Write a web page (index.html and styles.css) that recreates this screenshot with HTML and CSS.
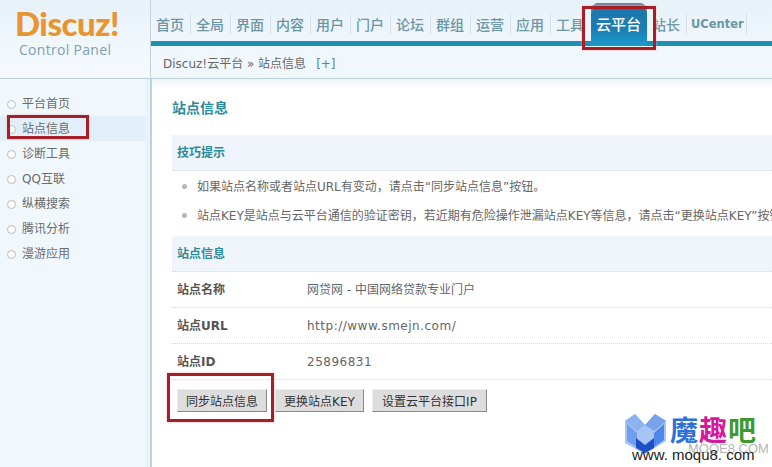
FILE: index.html
```html
<!DOCTYPE html>
<html lang="zh-CN">
<head>
    <meta charset="UTF-8">
    <meta name="viewport" content="width=device-width, initial-scale=1.0">
    <title>站点信息</title>
    <link rel="stylesheet" href="styles.css">
</head>
<body>
    <div class="header">
        <div class="logo">
            <div class="logo-name">Discuz!</div>
            <div class="logo-sub">Control Panel</div>
        </div>
        <div class="header-right">
            <div class="nav">
                <a class="nav-item">首页</a>
                <a class="nav-item">全局</a>
                <a class="nav-item">界面</a>
                <a class="nav-item">内容</a>
                <a class="nav-item">用户</a>
                <a class="nav-item">门户</a>
                <a class="nav-item">论坛</a>
                <a class="nav-item">群组</a>
                <a class="nav-item">运营</a>
                <a class="nav-item">应用</a>
                <a class="nav-item no-line">工具</a>
                <a class="nav-item active">云平台</a>
                <a class="nav-item">站长</a>
                <a class="nav-item latin">UCenter</a>
            </div>
            <div class="crumb">Discuz!云平台 » 站点信息<span class="crumb-add">[+]</span></div>
        </div>
    </div>

    <div class="main">
        <div class="sidebar">
            <ul class="side-list">
                <li>平台首页</li>
                <li class="current">站点信息</li>
                <li>诊断工具</li>
                <li>QQ互联</li>
                <li>纵横搜索</li>
                <li>腾讯分析</li>
                <li>漫游应用</li>
            </ul>
        </div>
        <div class="content">
            <h3 class="page-title">站点信息</h3>

            <div class="section-head">技巧提示</div>
            <ul class="tips">
                <li>如果站点名称或者站点URL有变动，请点击“同步站点信息”按钮。</li>
                <li>站点KEY是站点与云平台通信的验证密钥，若近期有危险操作泄漏站点KEY等信息，请点击“更换站点KEY”按钮。</li>
            </ul>

            <div class="section-head">站点信息</div>
            <div class="info-row"><span class="info-label">站点名称</span><span>网贷网 - 中国网络贷款专业门户</span></div>
            <div class="info-row"><span class="info-label">站点URL</span><span class="info-latin">http://www.smejn.com/</span></div>
            <div class="info-row"><span class="info-label">站点ID</span><span class="info-latin">25896831</span></div>

            <div class="buttons">
                <button class="btn btn-sync">同步站点信息</button>
                <button class="btn btn-key">更换站点KEY</button>
                <button class="btn btn-ip">设置云平台接口IP</button>
            </div>
        </div>
    </div>

    <!-- red marks drawn over the screenshot -->
    <div class="mark mark-nav"></div>
    <div class="mark mark-side"></div>
    <div class="mark mark-btn"></div>

    <div class="watermark">
        <svg class="wm-cube" width="41" height="41" viewBox="0 0 41 41">
            <polygon points="0,8 10,1 20,12 30,1 41,8 41,28 20,41 0,30" fill="#a6c4f4"/>
            <polygon points="0,8 10,1 20,12 12,18" fill="#8db2f0"/>
            <polygon points="20,12 30,1 41,8 29,18" fill="#77a2ec"/>
            <polygon points="2,11 12,20 12,34 2,28" fill="#6f9df0"/>
            <polygon points="29,20 39,11 39,27 29,34" fill="#4f86ea"/>
            <polygon points="11,25 20,32 29,25 29,35 20,40 11,35" fill="#1f4fc4"/>
        </svg>
        <div class="wm-text"><span class="wm-a">魔</span><span class="wm-b">趣</span><span class="wm-c">吧</span></div>
        <div class="wm-ghost">MOQE8.COM</div>
        <div class="wm-url">www. moqu8. com</div>
    </div>
</body>
</html>
```

FILE: styles.css
```css
* {
    margin: 0;
    padding: 0;
    box-sizing: border-box;
}

html, body {
    width: 772px;
    height: 467px;
    overflow: hidden;
}

body {
    position: relative;
    font-family: "DejaVu Sans", "Noto Sans CJK SC", sans-serif;
    font-size: 12px;
    color: #666;
    background: #fff;
}

ul {
    list-style: none;
}

/* header */
.header {
    display: flex;
    height: 79px;
    border-bottom: 1px solid #bcd0d8;
    background: linear-gradient(#e6f1f8, #f1f8fd 60%, #f4f9fd);
}

.logo {
    width: 151px;
    padding: 3px 0 0 15px;
    border-right: 1px solid #c3d5de;
}

.logo-name {
    font-family: Lato, sans-serif;
    font-weight: 900;
    font-size: 33px;
    line-height: 40px;
    color: #e8952f;
    letter-spacing: -0.5px;
}

.logo-sub {
    margin: -3px 0 0 4px;
    font-family: "Open Sans", sans-serif;
    font-size: 14px;
    line-height: 20px;
    letter-spacing: 0.3px;
    color: #7d9fae;
}

.header-right {
    flex: 1;
    min-width: 0;
}

.nav {
    display: flex;
    height: 46px;
    padding-top: 3px;
    border-bottom: 5px solid #1d90b3;
}

.nav-item {
    display: block;
    width: 40px;
    height: 20px;
    margin-top: 11px;
    padding-left: 5px;
    font-family: "Noto Sans CJK SC", sans-serif;
    font-size: 14px;
    line-height: 20px;
    color: #6b96a6;
    border-right: 1px solid #d3e2ea;
    font-weight: 500;
}

.nav-item.no-line {
    border-right: none;
}

/* taller than the nav so it covers the blue line */
.nav-item.active {
    width: 56px;
    height: 43px;
    margin-top: 0;
    padding: 11px 0 0 5px;
    font-size: 15px;
    color: #fff;
    border-right: none;
    border-radius: 8px 8px 0 0;
    background: linear-gradient(#1c76ac, #1c7db2 60%, #1b9ccb);
    box-shadow: inset 0 4px 0 #6f85a8;
}

.nav-item.latin {
    width: 60px;
    padding-left: 4px;
    font-family: "DejaVu Sans", sans-serif;
    font-size: 11.5px;
    font-weight: 700;
}

.crumb {
    height: 32px;
    padding-left: 12px;
    line-height: 36px;
    color: #666;
    background: #f1f8fd;
    white-space: nowrap;
}

.crumb-add {
    margin-left: 10px;
    color: #5d8294;
}

/* body */
.main {
    display: flex;
    height: 388px;
}

.sidebar {
    width: 152px;
    padding-top: 12px;
    background: linear-gradient(90deg, #f1f8fd 145px, #e9f3fa 145px);
    border-right: 2px solid #bdd3e4;
}

.side-list li {
    position: relative;
    width: 145px;
    height: 25px;
    padding-left: 22px;
    line-height: 27px;
    color: #6b6b6b;
}

.side-list li::before {
    content: "";
    position: absolute;
    left: 7px;
    top: 9px;
    width: 7px;
    height: 7px;
    border: 1px solid #bbb;
    border-radius: 50%;
    background: #fff;
}

.side-list li.current {
    background: #e0eff9;
}

.content {
    flex: 1;
    min-width: 0;
    padding-left: 20px;
    background: linear-gradient(#edf5fa, #fff 10px);
    white-space: nowrap;
}

.page-title {
    height: 56px;
    padding-top: 20px;
    font-size: 14px;
    line-height: 18px;
    font-weight: 700;
    color: #2b8b9c;
}

.section-head {
    height: 36px;
    padding-left: 5px;
    line-height: 37px;
    font-weight: 700;
    color: #2b8b9c;
    background: #f0f5fb;
    border-bottom: 1px dotted #d5dade;
}

.tips {
    height: 65px;
    padding-top: 2px;
}

.tips li {
    position: relative;
    height: 29px;
    padding-left: 25px;
    line-height: 29px;
    color: #666;
}

.tips li::before {
    content: "";
    position: absolute;
    left: 10px;
    top: 11px;
    width: 5px;
    height: 5px;
    border-radius: 50%;
    background: #b4b4b4;
}

.info-row {
    display: flex;
    height: 36px;
    line-height: 37px;
    border-bottom: 1px dotted #d5dade;
}

.info-label {
    width: 135px;
    padding-left: 5px;
    font-weight: 700;
    color: #555;
}

.info-latin {
    letter-spacing: 0.5px;
}

.buttons {
    display: flex;
    padding: 9px 0 0 5px;
}

.btn {
    height: 23px;
    margin-right: 8px;
    font-family: inherit;
    font-size: 12px;
    color: #333;
    background: #ddd;
    border: 1px solid;
    border-color: #eee #888 #888 #eee;
}

.btn-sync {
    width: 90px;
}

.btn-key {
    width: 89px;
}

.btn-ip {
    width: 115px;
}

/* red marks */
.mark {
    position: absolute;
    border: 3px solid #a81e26;
    box-shadow: 0 0 2px #f3b5b5;
}

.mark-nav {
    left: 582px;
    top: 6px;
    width: 74px;
    height: 44px;
}

.mark-side {
    left: 7px;
    top: 115px;
    width: 82px;
    height: 24px;
}

.mark-btn {
    left: 167px;
    top: 373px;
    width: 107px;
    height: 49px;
}

/* watermark in the corner */
.watermark {
    position: absolute;
    left: 625px;
    top: 412px;
    width: 147px;
    height: 50px;
}

.wm-cube {
    position: absolute;
    left: 0;
    top: 1px;
}

.wm-text {
    position: absolute;
    left: 45px;
    top: 0;
    font-family: "Noto Sans CJK SC", sans-serif;
    font-size: 28px;
    line-height: 34px;
    font-weight: 700;
    letter-spacing: 1px;
    white-space: nowrap;
}

.wm-a {
    color: #2f6fd8;
}

.wm-b {
    color: #d6189e;
}

.wm-c {
    color: #3f9a2e;
}

.wm-ghost {
    position: absolute;
    left: 63px;
    top: 30px;
    font-family: "Liberation Sans", sans-serif;
    font-size: 13px;
    line-height: 14px;
    color: #b5b5b5;
    white-space: nowrap;
}

.wm-url {
    position: absolute;
    left: 7px;
    top: 35px;
    font-family: "Liberation Sans", sans-serif;
    font-size: 15px;
    line-height: 16px;
    color: #222;
    white-space: nowrap;
}
```
